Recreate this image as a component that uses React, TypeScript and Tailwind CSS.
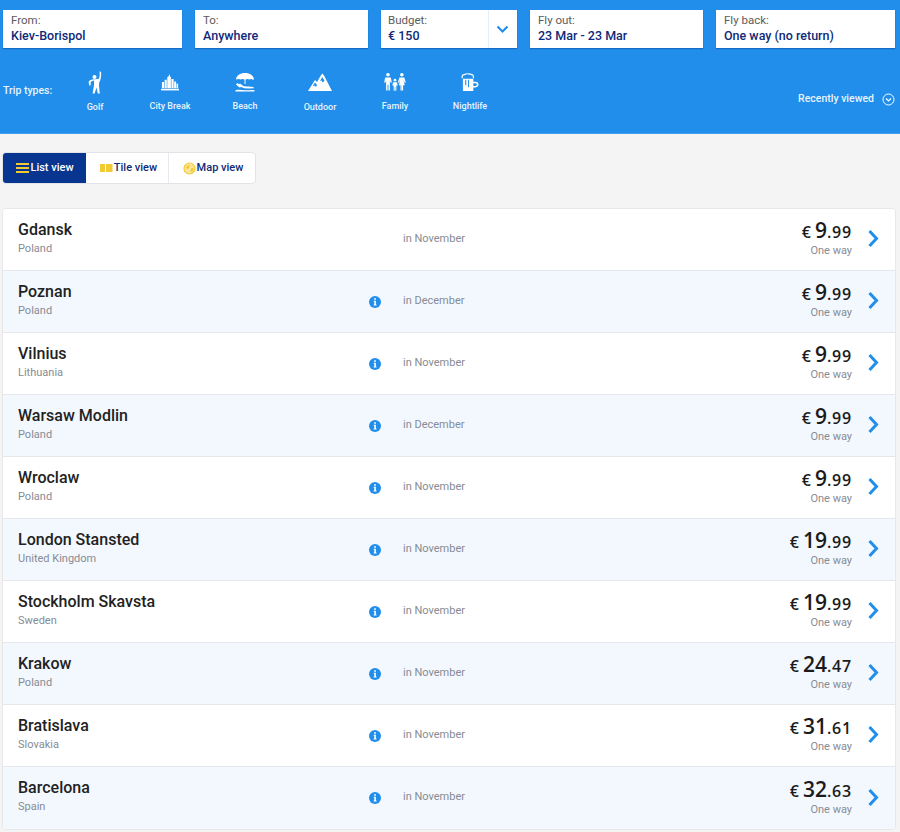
import React from "react";

const Field = ({ label, value, w }: { label: string; value: string; w: string }) => (
  <div className={`${w} h-[38px] bg-white shadow-[0_1px_1px_rgba(0,50,120,0.35)] pl-[8px] pt-[3px] shrink-0`}>
    <div className="text-[11.5px] leading-[14px] text-[#5b5b5b]">{label}</div>
    <div className="text-[12.5px] leading-[17px] font-medium text-[#0f2a78]">{value}</div>
  </div>
);

const Golf = () => (
  <svg width="14" height="23" viewBox="0 0 14 23" fill="white">
    <circle cx="6.500" cy="6" r="2" />
    <path d="M11.500 0.500 L13 0.800 C13.400 3 13.200 5.500 12.600 8 C12.300 9.500 11.800 10.500 11.200 11.500 L11 15 L11.800 22.500 L9.800 22.500 L8.500 16.500 L6.600 22.500 L4.600 22.500 L6 14 L6 9.500 C4.800 9.800 3.400 10 2.800 11 L2.600 14.500 L1.200 14.500 L0.600 10.800 C1.400 9 3.600 8.500 6 8.300 C8 8.200 10 8.200 11 7.500 C11.800 5.500 11.800 3 11.500 0.500 Z" />
  </svg>
);
const City = () => (
  <svg width="18" height="19" viewBox="0 0 20 20" fill="white">
    <path d="M0 17h20v1.800H0z" />
    <path d="M1 16.400V9.500h2.400v6.900zM4 16.400V7h2.400v9.400zM7 16.400V4l1.400-.6L9 1h.5l.5 2.400 1 .6v12.400zM11.600 16.400V6H14v10.400zM14.600 16.400V9h2.200v7.400zM17.300 16.400v-5H19v5z" />
  </svg>
);
const Beach = () => (
  <svg width="20" height="20" viewBox="0 0 20 20" fill="white">
    <path d="M1 7.500C1.400 3.500 5 1 10 1s8.600 2.500 9 6.500l-1.100.2C16.800 6.800 15.500 6.800 14.500 7.600 13.300 6.700 11.500 6.700 10.500 7.400L10.500 12h-1V7.400C8.500 6.700 6.700 6.700 5.500 7.600 4.500 6.800 3 6.800 1 7.500z" />
    <path d="M1 12.500l1.300-1.500 1.500 1 1.500-.2 3.500 2.400 4 0.300 1 .1 4.400.5.900 1.200-5 .2-5-.3-2.800-1.200-1.800.4z" />
    <path d="M0.500 18.200c3-1 6-.2 9.500 0s6.500-.8 9.500 0V19.500H.5z" />
  </svg>
);
const Mountain = () => (
  <svg width="24" height="18" viewBox="0 0 24 18" fill="white">
    <path fillRule="evenodd" d="M0 18 L7 7 L9 9 L12.500 3 L14.300 0.500 L16 2.500 L24 18 Z M7 9.500 L4.500 13.500 L6.700 12.400 L8 14 L9 12 Z M14.300 4 L12 8 L13.600 7.400 L14.800 9.500 L16.500 7.800 Z" />
  </svg>
);
const Family = () => (
  <svg width="22" height="18" viewBox="0 0 24 20" fill="white">
    <circle cx="4.200" cy="2" r="2" />
    <path d="M1 5h6.400l1 5.500-1.300.3-.8-2.800V19.500H4.700V13h-1v6.500H2.100V8l-.8 2.800L0 10.500z" />
    <circle cx="12" cy="8" r="1.500" />
    <path d="M9.800 10.400h4.400l.8 3.600-1 .2-.5-1.600v7h-1.200v-4h-.6v4h-1.200v-7l-.5 1.600-1-.2z" />
    <circle cx="19.600" cy="2" r="2" />
    <path d="M17 5h5.300l1.700 5.500-1.200.4-1.400-3.400 1.400 6.200H21V19.500h-1.300V14h-.3v5.500h-1.300V13.700h-1.800l1.400-6.200-1.400 3.400-1.200-.4z" />
  </svg>
);
const Mug = () => (
  <svg width="18" height="19" viewBox="0 0 19 20" fill="none">
    <path d="M1.500 5.500C.6 3.800 1.600 1.500 3.500 1.700 5.500.4 9.600.5 11.500 1.800 13 2 13.500 4 13 5.500" stroke="white" strokeWidth="1.300" />
    <path d="M2 6h11v3.200h2.200c2.200 0 3.300 1.400 3.300 3s-1.400 3-3.300 3H13V19H2z" fill="white" />
    <path d="M13 10.800h2.200c1 0 1.600.6 1.600 1.400s-.6 1.400-1.600 1.400H13z" fill="#208eea" />
    <path d="M5 7v6M8 7v8" stroke="#208eea" strokeWidth="1.100" />
  </svg>
);

const trips = [
  { name: "Golf", icon: <Golf />, d: "pt-[0px]", l: "mt-[3px]" },
  { name: "City Break", icon: <City />, d: "pt-[2px]", l: "mt-[2px]" },
  { name: "Beach", icon: <Beach />, d: "pt-[1px]", l: "mt-[2px]" },
  { name: "Outdoor", icon: <Mountain />, d: "pt-[2px]", l: "mt-[3px]" },
  { name: "Family", icon: <Family />, d: "pt-[2px]", l: "mt-[2px]" },
  { name: "Nightlife", icon: <Mug />, d: "pt-[2px]", l: "mt-[2px]" },
];

const rows = [
  ["Gdansk", "Poland", "in November", "9", "99", false],
  ["Poznan", "Poland", "in December", "9", "99", true],
  ["Vilnius", "Lithuania", "in November", "9", "99", true],
  ["Warsaw Modlin", "Poland", "in December", "9", "99", true],
  ["Wroclaw", "Poland", "in November", "9", "99", true],
  ["London Stansted", "United Kingdom", "in November", "19", "99", true],
  ["Stockholm Skavsta", "Sweden", "in November", "19", "99", true],
  ["Krakow", "Poland", "in November", "24", "47", true],
  ["Bratislava", "Slovakia", "in November", "31", "61", true],
  ["Barcelona", "Spain", "in November", "32", "63", true],
] as const;

export default function App() {
  return (
    <div className="w-[900px] h-[832px] overflow-hidden bg-[#f4f4f4] font-['Roboto',sans-serif]">
      <header className="h-[134px] bg-[#208eea] pt-[10px] border-b border-[#3f9fee]">
        <div className="flex pl-[3px] pr-[5px] justify-between">
          <Field label="From:" value="Kiev-Borispol" w="w-[179px]" />
          <Field label="To:" value="Anywhere" w="w-[173px]" />
          <div className="w-[136px] h-[38px] bg-white shrink-0 flex shadow-[0_1px_1px_rgba(0,50,120,0.35)]">
            <div className="w-[107px] pl-[7px] pt-[3px]">
              <div className="text-[11.5px] leading-[14px] text-[#5b5b5b]">Budget:</div>
              <div className="text-[12.5px] leading-[17px] font-medium text-[#0f2a78]">€ 150</div>
            </div>
            <div className="flex-1 border-l border-[#e3eef8] flex items-center justify-center pr-[1px]">
              <svg width="13" height="9" viewBox="0 0 13 9" fill="none">
                <path d="M1.500 1.500L6.500 6.500L11.500 1.500" stroke="#208eea" strokeWidth="2.200" />
              </svg>
            </div>
          </div>
          <Field label="Fly out:" value="23 Mar - 23 Mar" w="w-[173px]" />
          <Field label="Fly back:" value="One way (no return)" w="w-[179px]" />
        </div>
        <div className="flex items-start mt-[23px] pl-[3px] pr-[5px] text-white">
          <div className="w-[54.500px] pt-[13px] text-[10.500px] leading-[14px] font-medium text-[#e8f3fd]">Trip types:</div>
          <div className="flex">
            {trips.map((t) => (
              <div key={t.name} className="w-[75px] flex flex-col items-center">
                <div className={`h-[25px] flex items-start justify-center ${t.d}`}>{t.icon}</div>
                <div className={`text-[9px] leading-[12px] font-medium text-[#e8f3fd] ${t.l} pt-[2px]`}>{t.name}</div>
              </div>
            ))}
          </div>
          <div className="ml-auto flex items-center gap-[8px] pt-[21px] text-[10.500px] leading-[14px] font-medium text-[#e8f3fd]">
            Recently viewed
            <svg width="13" height="13" viewBox="0 0 13 13" fill="none">
              <circle cx="6.500" cy="6.500" r="5.500" stroke="white" strokeWidth="1" />
              <path d="M4 5.500L6.500 8L9 5.500" stroke="white" strokeWidth="1.200" />
            </svg>
          </div>
        </div>
      </header>

      <div className="pt-[18px] pl-[2px]">
        <div className="flex w-[254px] h-[32px] rounded-[4px] bg-white border border-[#e2e3e6] overflow-hidden text-[11px] font-medium text-[#0f2a78]">
          <div className="w-[84px] bg-[#073590] text-white flex items-center justify-center gap-[1px] -ml-[1px] -my-[1px] rounded-l-[4px] pl-[2px]">
            <svg width="13" height="10" viewBox="0 0 13 10" fill="#f1c933"><path d="M0 0h13v2H0zM0 4h13v2H0zM0 8h13v2H0z" /></svg>
            List view
          </div>
          <div className="w-[83px] flex items-center justify-center gap-[1px] border-r border-[#e8e9ec] pl-[3px]">
            <svg width="13" height="10" viewBox="0 0 13 10" fill="#f1c933"><path d="M0 1h5v8H0zM6 1h6.500v8H6z" /></svg>
            Tile view
          </div>
          <div className="flex-1 flex items-center justify-center gap-[1px] pl-[2px]">
            <svg width="13" height="13" viewBox="0 0 13 13" fill="none">
              <circle cx="6.500" cy="6.500" r="5.500" stroke="#f1c933" strokeWidth="1.200" fill="#fbe69a" />
              <path d="M3 6c1-2 2-3 4-2.500L6 6 4.500 7zM8 6.500l2.500-1L10 9l-2.500 1z" fill="#f1c933" />
            </svg>
            Map view
          </div>
        </div>
      </div>

      <div className="mt-[24px] ml-[2px] w-[894px] bg-white rounded-[4px] border border-[#e8e8e8] overflow-hidden">
        {rows.map(([city, country, when, whole, cents, info], i) => (
          <div
            key={city}
            className={`h-[62px] flex items-center border-b border-[#e6e7ea] last:border-b-0 ${i % 2 ? "bg-[#f3f8fe]" : "bg-white"}`}
          >
            <div className="w-[360px] pl-[15px] shrink-0 -mt-[3px]">
              <div className="text-[16px] leading-[20px] font-medium text-[#222222] -mt-[1px]">{city}</div>
              <div className="text-[11px] leading-[14px] mt-[2px] text-[#878b94]">{country}</div>
            </div>
            <div className="w-[40px] shrink-0 flex justify-center -ml-[8px] mr-[8px]">
              {info && (
                <svg width="12" height="12" viewBox="0 0 12 12">
                  <circle cx="6" cy="6" r="6" fill="#208eea" />
                  <path d="M5.100 2.200h1.800v1.500H5.100zM4.700 4.800h2.200v3.700h.6v1H4.600v-1h.7V5.800h-.6z" fill="white" />
                </svg>
              )}
            </div>
            <div className="flex-1 text-[11px] text-[#878b94] -mt-[1px]">{when}</div>
            <div className="flex flex-col items-end -mt-[3px]">
              <div className="flex items-baseline leading-[24px] font-['Open_Sans',sans-serif] text-[#1b1b1b] font-semibold">
                <span className="text-[16px] mr-[4px]">€</span>
                <span className="text-[21px]">{whole}</span>
                <span className="text-[16px] tracking-[0.8px]">.{cents}</span>
              </div>
              <div className="text-[11px] leading-[14px] text-[#878b94]">One way</div>
            </div>
            <div className="w-[43px] shrink-0 flex justify-center -mt-[2px]">
              <svg width="13" height="19" viewBox="0 0 13 19" fill="none">
                <path d="M2.500 2L9.500 9.500L2.500 17" stroke="#208eea" strokeWidth="3" />
              </svg>
            </div>
          </div>
        ))}
      </div>
    </div>
  );
}
